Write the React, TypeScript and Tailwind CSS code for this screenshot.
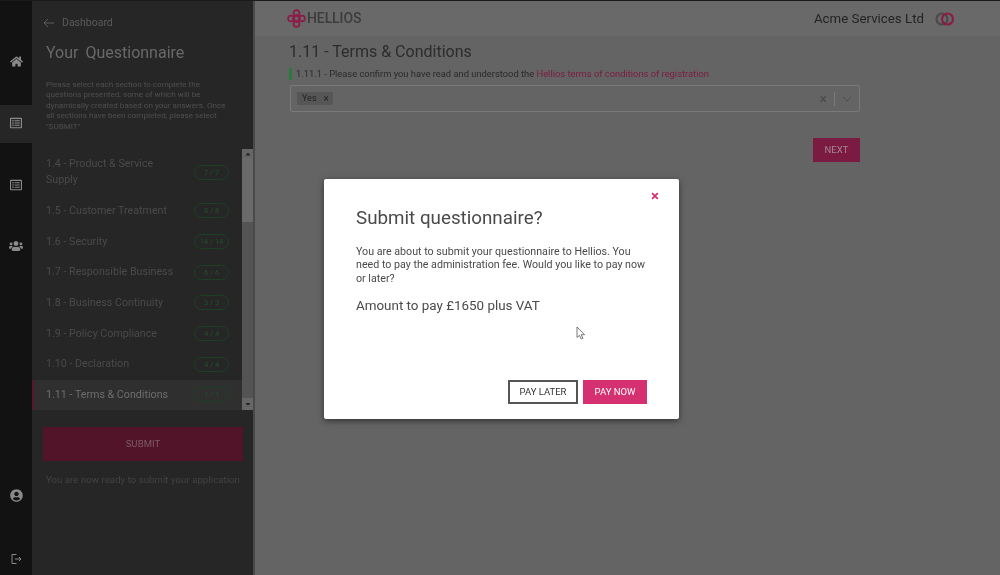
import { FaHome, FaRegListAlt, FaUsers, FaUserCircle, FaCaretUp, FaCaretDown } from "react-icons/fa";

const sections = [
  { name: "1.5 - Customer Treatment", score: "8 / 8" },
  { name: "1.6 - Security", score: "14 / 14" },
  { name: "1.7 - Responsible Business", score: "6 / 6" },
  { name: "1.8 - Business Continuity", score: "3 / 3" },
  { name: "1.9 - Policy Compliance", score: "4 / 4" },
  { name: "1.10 - Declaration", score: "4 / 4" },
];

function Badge({ children }: { children: React.ReactNode }) {
  return (
    <span className="flex h-[15px] w-[35px] shrink-0 items-center justify-center rounded-full border border-[#1c4024] text-[7.500px] text-[#22502c]">
      {children}
    </span>
  );
}

function Logo() {
  return (
    <svg width="19" height="19" viewBox="0 0 19 19" fill="none" stroke="#8b1c48" strokeWidth="1.8">
      <circle cx="9.5" cy="4" r="2.9" />
      <circle cx="9.5" cy="15" r="2.9" />
      <circle cx="4" cy="9.5" r="2.9" />
      <circle cx="15" cy="9.5" r="2.9" />
      <rect x="7" y="7" width="5" height="5" transform="rotate(45 9.5 9.5)" />
    </svg>
  );
}

export default function App() {
  return (
    <div className="relative flex h-[575px] w-[1000px] overflow-hidden bg-[#646464] font-['Roboto',sans-serif] blur-[0.35px]">
      <div className="absolute inset-x-0 top-0 h-px bg-[#1a1a1a]" />

      {/* icon rail */}
      <nav className="flex w-[32px] shrink-0 flex-col items-center bg-[#121212] text-[#8a8a8a]">
        <div className="flex h-[105px] w-full items-end justify-center pb-[37px]">
          <FaHome size={13} />
        </div>
        <div className="flex h-[38px] w-full items-center justify-center bg-[#262626] pb-[2px]">
          <FaRegListAlt size={12} />
        </div>
        <div className="flex h-[83px] w-full items-center justify-center">
          <FaRegListAlt size={12} />
        </div>
        <div className="flex h-[40px] w-full items-center justify-center">
          <FaUsers size={14} />
        </div>
        <div className="flex-1" />
        <div className="mb-[51px] flex w-full justify-center">
          <FaUserCircle size={13} />
        </div>
        <div className="mb-[10px] flex w-full justify-center">
          <svg width="12" height="12" viewBox="0 0 12 12" fill="none" stroke="#8a8a8a" strokeWidth="1">
            <path d="M6.5 1.5H2v9h4.500M5 6h6M9 4l2 2-2 2" />
          </svg>
        </div>
      </nav>

      {/* sidebar */}
      <aside className="flex w-[221px] shrink-0 flex-col bg-[#262626]">
        <div className="pl-[11px] pt-[17px]">
          <div className="flex h-[12px] items-center gap-[8px] text-[10.5px] text-[#5a5a5a]">
            <svg width="11" height="10" viewBox="0 0 11 10" fill="none" stroke="#5a5a5a" strokeWidth="1">
              <path d="M11 5H1M5 1 1 5l4 4" />
            </svg>
            <span>Dashboard</span>
          </div>
        </div>
        <h1 className="pl-[14px] pt-[14px] text-[16px] leading-[20px] text-[#696969] [word-spacing:3px]">
          Your Questionnaire
        </h1>
        <p className="h-[64px] whitespace-nowrap pl-[14px] pt-[16px] text-[8.100px] leading-[10.400px] text-[#4f4f4f]">
          Please select each section to complete the
          <br />
          questions presented, some of which will be
          <br />
          dynamically created based on your answers. Once
          <br />
          all sections have been completed, please select
          <br />
          "SUBMIT"
        </p>

        <div className="mt-[22px] flex h-[261px] overflow-hidden">
          <div className="flex w-[210px] shrink-0 flex-col text-[10.700px] text-[#4a4a4a]">
            <div className="flex h-[46.500px] shrink-0 items-center justify-between pl-[14px] pr-[13px]">
              <span className="w-[120px] leading-[16px]">1.4 - Product &amp; Service Supply</span>
              <Badge>7 / 7</Badge>
            </div>
            {sections.map((s) => (
              <div key={s.name} className="flex h-[30.700px] shrink-0 items-center justify-between pl-[14px] pr-[13px]">
                <span>{s.name}</span>
                <Badge>{s.score}</Badge>
              </div>
            ))}
            <div className="flex h-[30.300px] shrink-0 items-center justify-between border-l-2 border-[#5c1530] bg-[#2f2f2f] pl-[12px] pr-[13px] text-[#6e6e6e]">
              <span>1.11 - Terms &amp; Conditions</span>
              <Badge>1 / 1</Badge>
            </div>
          </div>
          <div className="flex w-[11px] shrink-0 flex-col bg-[#545454] text-[#232323]">
            <div className="flex h-[9px] items-center justify-center bg-[#666666]">
              <FaCaretUp size={8} />
            </div>
            <div className="h-[64px] bg-[#6a6a6a]" />
            <div className="flex-1" />
            <div className="flex h-[12px] items-center justify-center bg-[#666666]">
              <FaCaretDown size={8} />
            </div>
          </div>
        </div>

        <div className="px-[11px] pt-[17px]">
          <div className="flex h-[34px] w-[200px] items-center justify-center bg-[#511429] text-[9.500px] tracking-[0.1px] text-[#7d5a67]">
            SUBMIT
          </div>
          <p className="w-[200px] pt-[13px] text-center text-[9.500px] leading-[12px] tracking-[0.1px] text-[#434343]">
            You are now ready to submit your application
          </p>
        </div>
      </aside>
      <div className="w-[2px] shrink-0 bg-[#4a4a4a]" />

      {/* main */}
      <main className="flex min-w-0 flex-1 flex-col">
        <header className="mt-px flex h-[35px] shrink-0 items-center bg-[#696969] pl-[32px] pr-[45px]">
          <div className="flex items-center">
            <Logo />
            <span className="ml-[1px] text-[14px] font-medium tracking-[-0.1px] text-[#3c3c3c]">HELLIOS</span>
          </div>
          <span className="ml-auto text-[13.300px] text-[#232323]">Acme Services Ltd</span>
          <svg className="ml-[11px]" width="20" height="14" viewBox="0 0 20 14" fill="none" strokeWidth="2.2">
            <circle cx="7" cy="7" r="5.500" stroke="#4a4a4a" />
            <circle cx="12.500" cy="7" r="5.500" stroke="#8b1c48" />
          </svg>
        </header>
        <section className="pl-[35px] pr-[140px]">
          <h2 className="-ml-[1px] pt-[6px] text-[16px] leading-[20px] text-[#2c2c2c]">1.11 - Terms &amp; Conditions</h2>
          <div className="-ml-[1px] mt-[6px] flex h-[12px] items-center gap-[4px] text-[9.350px] text-[#2a2a2a]">
            <span className="h-[12px] w-[3px] bg-[#2a7a3e]" />
            <span>
              1.11.1 - Please confirm you have read and understood the{" "}
              <span className="text-[#7c1a40]">Hellios terms of conditions of registration</span>
            </span>
          </div>
          <div className="mt-[5px] flex h-[27px] w-[570px] items-center rounded-[2px] border border-[#7a7a7a] pl-[6px]">
            <span className="flex h-[13px] w-[36px] items-center gap-[7px] rounded-[1px] bg-[#565656] pl-[5px] text-[9px] text-[#232323]">
              Yes <span className="text-[10px] leading-none">×</span>
            </span>
            <span className="ml-auto text-[14px] leading-none text-[#4a4a4a]">×</span>
            <span className="mx-[7px] h-[14px] w-px bg-[#7a7a7a]" />
            <svg className="mr-[7px]" width="10" height="6" viewBox="0 0 10 6" fill="none" stroke="#4a4a4a">
              <path d="m1 1 4 4 4-4" />
            </svg>
          </div>
          <div className="mt-[26px] flex w-[570px] justify-end">
            <button className="flex h-[24px] w-[47px] items-center justify-center bg-[#7b1b41] text-[9.500px] text-[#a88494]">
              NEXT
            </button>
          </div>
        </section>
      </main>

      {/* modal */}
      <div className="absolute left-[324px] top-[179px] flex h-[240px] w-[355px] flex-col rounded-[2px] bg-white px-[32px] shadow-[0_2px_6px_rgba(0,0,0,0.5)]">
        <span className="absolute right-[20px] top-[9px] text-[15px] font-bold leading-[17px] text-[#d5306f]">×</span>
        <h3 className="pt-[27px] text-[18.800px] leading-[24px] text-[#4a4a4a]">Submit questionnaire?</h3>
        <p className="-mr-[4px] pt-[15px] text-[10.680px] leading-[13.300px] text-[#4a4a4a]">
          You are about to submit your questionnaire to Hellios. You need to pay the administration fee. Would you
          like to pay now or later?
        </p>
        <p className="pt-[12px] text-[13.400px] leading-[18px] text-[#4a4a4a]">Amount to pay £1650 plus VAT</p>
        <div className="mt-auto mb-[15px] flex justify-end gap-[5px]">
          <button className="flex h-[24px] w-[70px] items-center justify-center border-2 border-[#555555] text-[9.500px] text-[#333333]">
            PAY LATER
          </button>
          <button className="flex h-[24px] w-[64px] items-center justify-center bg-[#d5306f] text-[9.500px] text-white">
            PAY NOW
          </button>
        </div>
      </div>

      {/* mouse pointer */}
      <svg className="absolute left-[576px] top-[326px]" width="10" height="15" viewBox="0 0 10 15" fill="white" stroke="#555" strokeWidth="0.8">
        <path d="M1 1v10.500l2.500-2.200 1.700 3.700 1.700-.8-1.700-3.500H8.500z" />
      </svg>
    </div>
  );
}
